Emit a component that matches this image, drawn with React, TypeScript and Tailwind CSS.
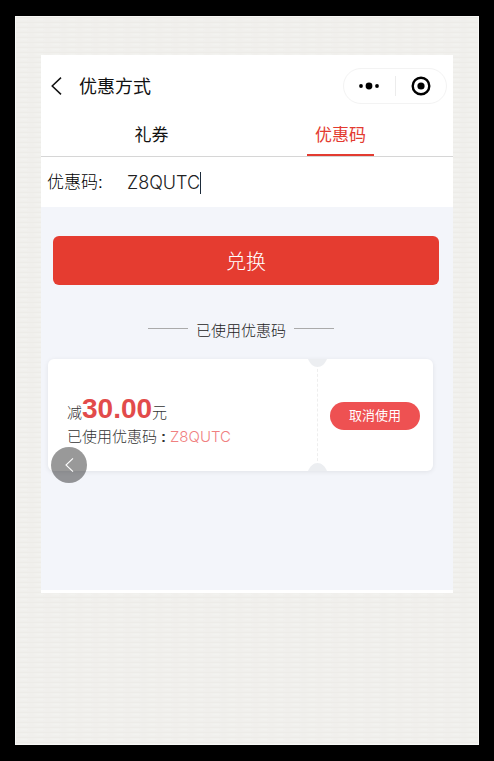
import React, { useState } from 'react';

const TABS = ['礼券', '优惠码'];

function BackIcon() {
  return (
    <svg width="11" height="18" viewBox="0 0 11 18" fill="none" stroke="#111" strokeWidth="1.5" aria-hidden="true">
      <path d="M10 0.6 1.2 9 10 17.4" />
    </svg>
  );
}

function Capsule() {
  return (
    <div className="flex h-9 w-[104px] items-center rounded-full border border-[#f3f3f3] bg-white">
      <button type="button" aria-label="更多" className="flex flex-1 items-center justify-center">
        <svg width="22" height="8" viewBox="0 0 22 8" fill="#000">
          <circle cx="3" cy="4" r="1.9" />
          <circle cx="11" cy="4" r="3.4" />
          <circle cx="19" cy="4" r="1.9" />
        </svg>
      </button>
      <span className="h-5 w-px bg-[#ececec]" />
      <button type="button" aria-label="关闭" className="flex flex-1 items-center justify-center">
        <svg width="20" height="20" viewBox="0 0 20 20">
          <circle cx="10" cy="10" r="8.3" fill="none" stroke="#000" strokeWidth="2.4" />
          <circle cx="10" cy="10" r="3.6" fill="#000" />
        </svg>
      </button>
    </div>
  );
}

function Header() {
  return (
    <header className="flex h-[62px] items-center pl-[10px] pr-[6px]">
      <button type="button" aria-label="返回" className="shrink-0">
        <BackIcon />
      </button>
      <h1 className="ml-[17px] flex-1 pt-[2px] text-lg font-normal text-[#111]">优惠方式</h1>
      <Capsule />
    </header>
  );
}

function Tabs({ active, onChange }: { active: string; onChange: (tab: string) => void }) {
  return (
    <nav className="flex h-10 border-b border-[#d6d6d6] pl-4 pr-[18px]">
      {TABS.map((tab) => (
        <div key={tab} className="flex flex-1 justify-center">
          <button
            type="button"
            onClick={() => onChange(tab)}
            className={`border-b-2 px-2 text-[17px] font-normal ${
              tab === active ? 'border-[#e33b30] text-[#e33b30]' : 'border-transparent text-[#111]'
            }`}
          >
            {tab}
          </button>
        </div>
      ))}
    </nav>
  );
}

function Coupon({ amount, code }: { amount: string; code: string }) {
  return (
    <section className="relative ml-[7px] mr-5 flex h-28 rounded-md bg-white shadow-[0_1px_5px_rgba(0,0,0,0.08)]">
      <div className="flex flex-1 flex-col justify-center pl-[19px] pt-3 text-[15px] text-[#333]">
        <p className="flex h-7 items-baseline leading-7">
          减<strong className="text-[28px] font-bold text-[#e24b4b]">{amount}</strong>元
        </p>
        <p className="mt-1 whitespace-nowrap leading-5">
          已使用优惠码<span className="mx-1 font-bold">:</span>
          <span className="font-['Inter'] text-[15px] font-light text-[#f08080]">{code}</span>
        </p>
      </div>
      <div className="relative flex w-[116px] items-center border-l border-dashed border-[#eeeeee] pl-3 pt-[2px]">
        <svg className="absolute -left-[10px] top-0" width="19" height="8" viewBox="0 0 19 8" fill="#eceef1">
          <path d="M0 0h19C17 5 13.5 8 9.5 8S2 5 0 0z" />
        </svg>
        <svg className="absolute -left-[10px] bottom-0" width="19" height="8" viewBox="0 0 19 8" fill="#eceef1">
          <path d="M0 8h19C17 3 13.5 0 9.5 0S2 3 0 8z" />
        </svg>
        <button type="button" className="h-7 w-[90px] rounded-full bg-[#ee5152] text-[13px] font-normal text-white">
          取消使用
        </button>
      </div>
      <button
        type="button"
        aria-label="后退"
        className="absolute left-[3px] top-[88px] flex size-9 items-center justify-center rounded-full bg-black/40"
      >
        <svg width="9" height="14" viewBox="0 0 9 14" fill="none" stroke="#fff" strokeWidth="1.1">
          <path d="M8 0.4 1 7 8 13.6" />
        </svg>
      </button>
    </section>
  );
}

export default function App() {
  const [tab, setTab] = useState('优惠码');
  const [code, setCode] = useState('Z8QUTC');

  return (
    <div className="min-h-screen bg-black px-[15px] py-4 font-['Liberation_Sans','Noto_Sans_CJK_SC',sans-serif] font-light">
      <div className="min-h-[729px] border border-[#f8f8f6] bg-[#f0efec] bg-[radial-gradient(ellipse_8px_2px_at_50%_50%,#f3f3f0,transparent),linear-gradient(#edece8_1px,transparent_1px)] bg-[length:16px_5px] px-[25px] pt-[38px]">
        <main className="border-b-3 border-white bg-[#f3f5fa] pb-[119px]">
          <div className="bg-white">
            <Header />
            <Tabs active={tab} onChange={setTab} />
            <div className="flex h-[50px] items-center pl-[6px] pt-[2px]">
              <label htmlFor="code" className="w-20 text-[17px] text-black">
                优惠码:
              </label>
              <div className="flex flex-1 items-center">
                <input
                  id="code"
                  value={code}
                  onChange={(e) => setCode(e.target.value)}
                  className="w-[73px] font-['Inter'] text-lg text-[#222] outline-none"
                />
                <span className="h-[22px] w-px bg-[#1d2b3a]" />
              </div>
            </div>
          </div>
          <div className="pl-3 pr-[14px] pt-[29px]">
            <button type="button" className="h-[49px] w-full rounded-md bg-[#e53c30] pt-[2px] text-xl text-white">
              兑换
            </button>
          </div>
          <div className="flex items-center justify-center gap-2 pb-4 pr-3 pt-[34px] text-[15px] leading-6 text-[#222]">
            <span className="mb-[6px] h-px w-10 bg-[#aaa]" />
            <h2>已使用优惠码</h2>
            <span className="mb-[6px] h-px w-10 bg-[#aaa]" />
          </div>
          <Coupon amount="30.00" code="Z8QUTC" />
        </main>
      </div>
    </div>
  );
}
